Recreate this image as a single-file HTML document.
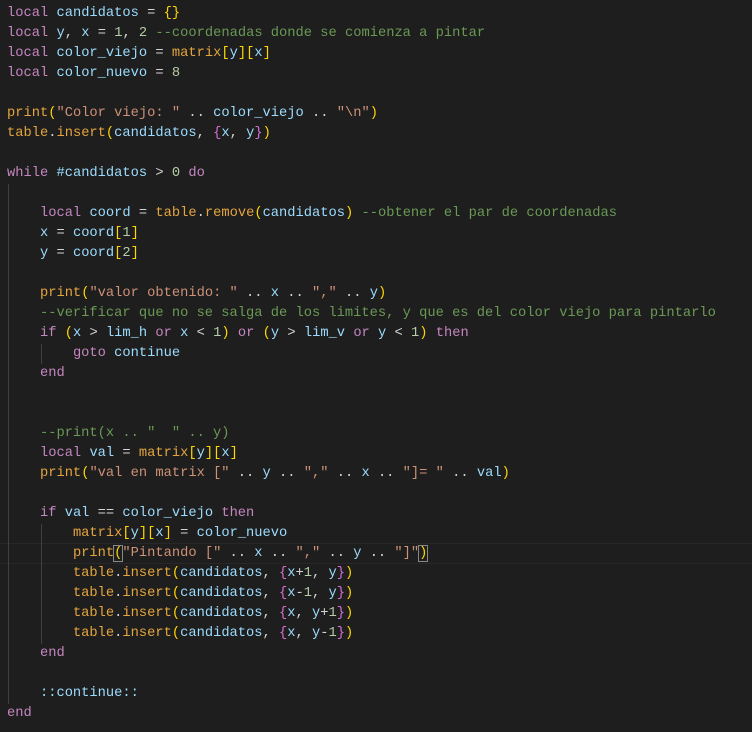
<!DOCTYPE html>
<html><head><meta charset="utf-8"><style>
html,body{margin:0;padding:0;background:#1e1e1e;width:752px;height:732px;overflow:hidden;position:relative}
pre{margin:0;position:absolute;left:7px;top:4px;font-family:"Liberation Mono",monospace;font-size:13.74px;line-height:20px;color:#d4d4d4;white-space:pre}
.k{color:#c586c0}.v{color:#9cdcfe}.f{color:#e5a53e}.s{color:#ce9178}.n{color:#b5cea8}.c{color:#6a9955}
.b1{color:#ffd700}.b2{color:#da70d6}
.g{position:absolute;width:1px;background:#404040}
.cur{position:absolute;left:0;width:752px;top:543px;height:19px;border-top:1px solid #282828;border-bottom:1px solid #282828}
.bm{outline:1px solid #888;}
</style></head><body>
<div class="cur"></div>
<div class="g" style="left:8px;top:184px;height:520px"></div>
<div class="g" style="left:41px;top:344px;height:20px"></div>
<div class="g" style="left:41px;top:524px;height:120px"></div>
<pre><span class="k">local</span> <span class="v">candidatos</span> = <span class="b1">{}</span>
<span class="k">local</span> <span class="v">y</span>, <span class="v">x</span> = <span class="n">1</span>, <span class="n">2</span> <span class="c">--coordenadas donde se comienza a pintar</span>
<span class="k">local</span> <span class="v">color_viejo</span> = <span class="f">matrix</span><span class="b1">[</span><span class="v">y</span><span class="b1">][</span><span class="v">x</span><span class="b1">]</span>
<span class="k">local</span> <span class="v">color_nuevo</span> = <span class="n">8</span>

<span class="f">print</span><span class="b1">(</span><span class="s">"Color viejo: "</span> .. <span class="v">color_viejo</span> .. <span class="s">"\n"</span><span class="b1">)</span>
<span class="f">table</span>.<span class="f">insert</span><span class="b1">(</span><span class="v">candidatos</span>, <span class="b2">{</span><span class="v">x</span>, <span class="v">y</span><span class="b2">}</span><span class="b1">)</span>

<span class="k">while</span> <span class="v">#candidatos</span> &gt; <span class="n">0</span> <span class="k">do</span>

    <span class="k">local</span> <span class="v">coord</span> = <span class="f">table</span>.<span class="f">remove</span><span class="b1">(</span><span class="v">candidatos</span><span class="b1">)</span> <span class="c">--obtener el par de coordenadas</span>
    <span class="v">x</span> = <span class="v">coord</span><span class="b1">[</span><span class="n">1</span><span class="b1">]</span>
    <span class="v">y</span> = <span class="v">coord</span><span class="b1">[</span><span class="n">2</span><span class="b1">]</span>

    <span class="f">print</span><span class="b1">(</span><span class="s">"valor obtenido: "</span> .. <span class="v">x</span> .. <span class="s">","</span> .. <span class="v">y</span><span class="b1">)</span>
    <span class="c">--verificar que no se salga de los limites, y que es del color viejo para pintarlo</span>
    <span class="k">if</span> <span class="b1">(</span><span class="v">x</span> &gt; <span class="v">lim_h</span> <span class="k">or</span> <span class="v">x</span> &lt; <span class="n">1</span><span class="b1">)</span> <span class="k">or</span> <span class="b1">(</span><span class="v">y</span> &gt; <span class="v">lim_v</span> <span class="k">or</span> <span class="v">y</span> &lt; <span class="n">1</span><span class="b1">)</span> <span class="k">then</span>
        <span class="k">goto</span> <span class="v">continue</span>
    <span class="k">end</span>


    <span class="c">--print(x .. "  " .. y)</span>
    <span class="k">local</span> <span class="v">val</span> = <span class="f">matrix</span><span class="b1">[</span><span class="v">y</span><span class="b1">][</span><span class="v">x</span><span class="b1">]</span>
    <span class="f">print</span><span class="b1">(</span><span class="s">"val en matrix ["</span> .. <span class="v">y</span> .. <span class="s">","</span> .. <span class="v">x</span> .. <span class="s">"]= "</span> .. <span class="v">val</span><span class="b1">)</span>

    <span class="k">if</span> <span class="v">val</span> == <span class="v">color_viejo</span> <span class="k">then</span>
        <span class="f">matrix</span><span class="b1">[</span><span class="v">y</span><span class="b1">][</span><span class="v">x</span><span class="b1">]</span> = <span class="v">color_nuevo</span>
        <span class="f">print</span><span class="b1 bm">(</span><span class="s">"Pintando ["</span> .. <span class="v">x</span> .. <span class="s">","</span> .. <span class="v">y</span> .. <span class="s">"]"</span><span class="b1 bm">)</span>
        <span class="f">table</span>.<span class="f">insert</span><span class="b1">(</span><span class="v">candidatos</span>, <span class="b2">{</span><span class="v">x</span>+<span class="n">1</span>, <span class="v">y</span><span class="b2">}</span><span class="b1">)</span>
        <span class="f">table</span>.<span class="f">insert</span><span class="b1">(</span><span class="v">candidatos</span>, <span class="b2">{</span><span class="v">x</span>-<span class="n">1</span>, <span class="v">y</span><span class="b2">}</span><span class="b1">)</span>
        <span class="f">table</span>.<span class="f">insert</span><span class="b1">(</span><span class="v">candidatos</span>, <span class="b2">{</span><span class="v">x</span>, <span class="v">y</span>+<span class="n">1</span><span class="b2">}</span><span class="b1">)</span>
        <span class="f">table</span>.<span class="f">insert</span><span class="b1">(</span><span class="v">candidatos</span>, <span class="b2">{</span><span class="v">x</span>, <span class="v">y</span>-<span class="n">1</span><span class="b2">}</span><span class="b1">)</span>
    <span class="k">end</span>

    <span class="v">::continue::</span>
<span class="k">end</span></pre>
</body></html>
